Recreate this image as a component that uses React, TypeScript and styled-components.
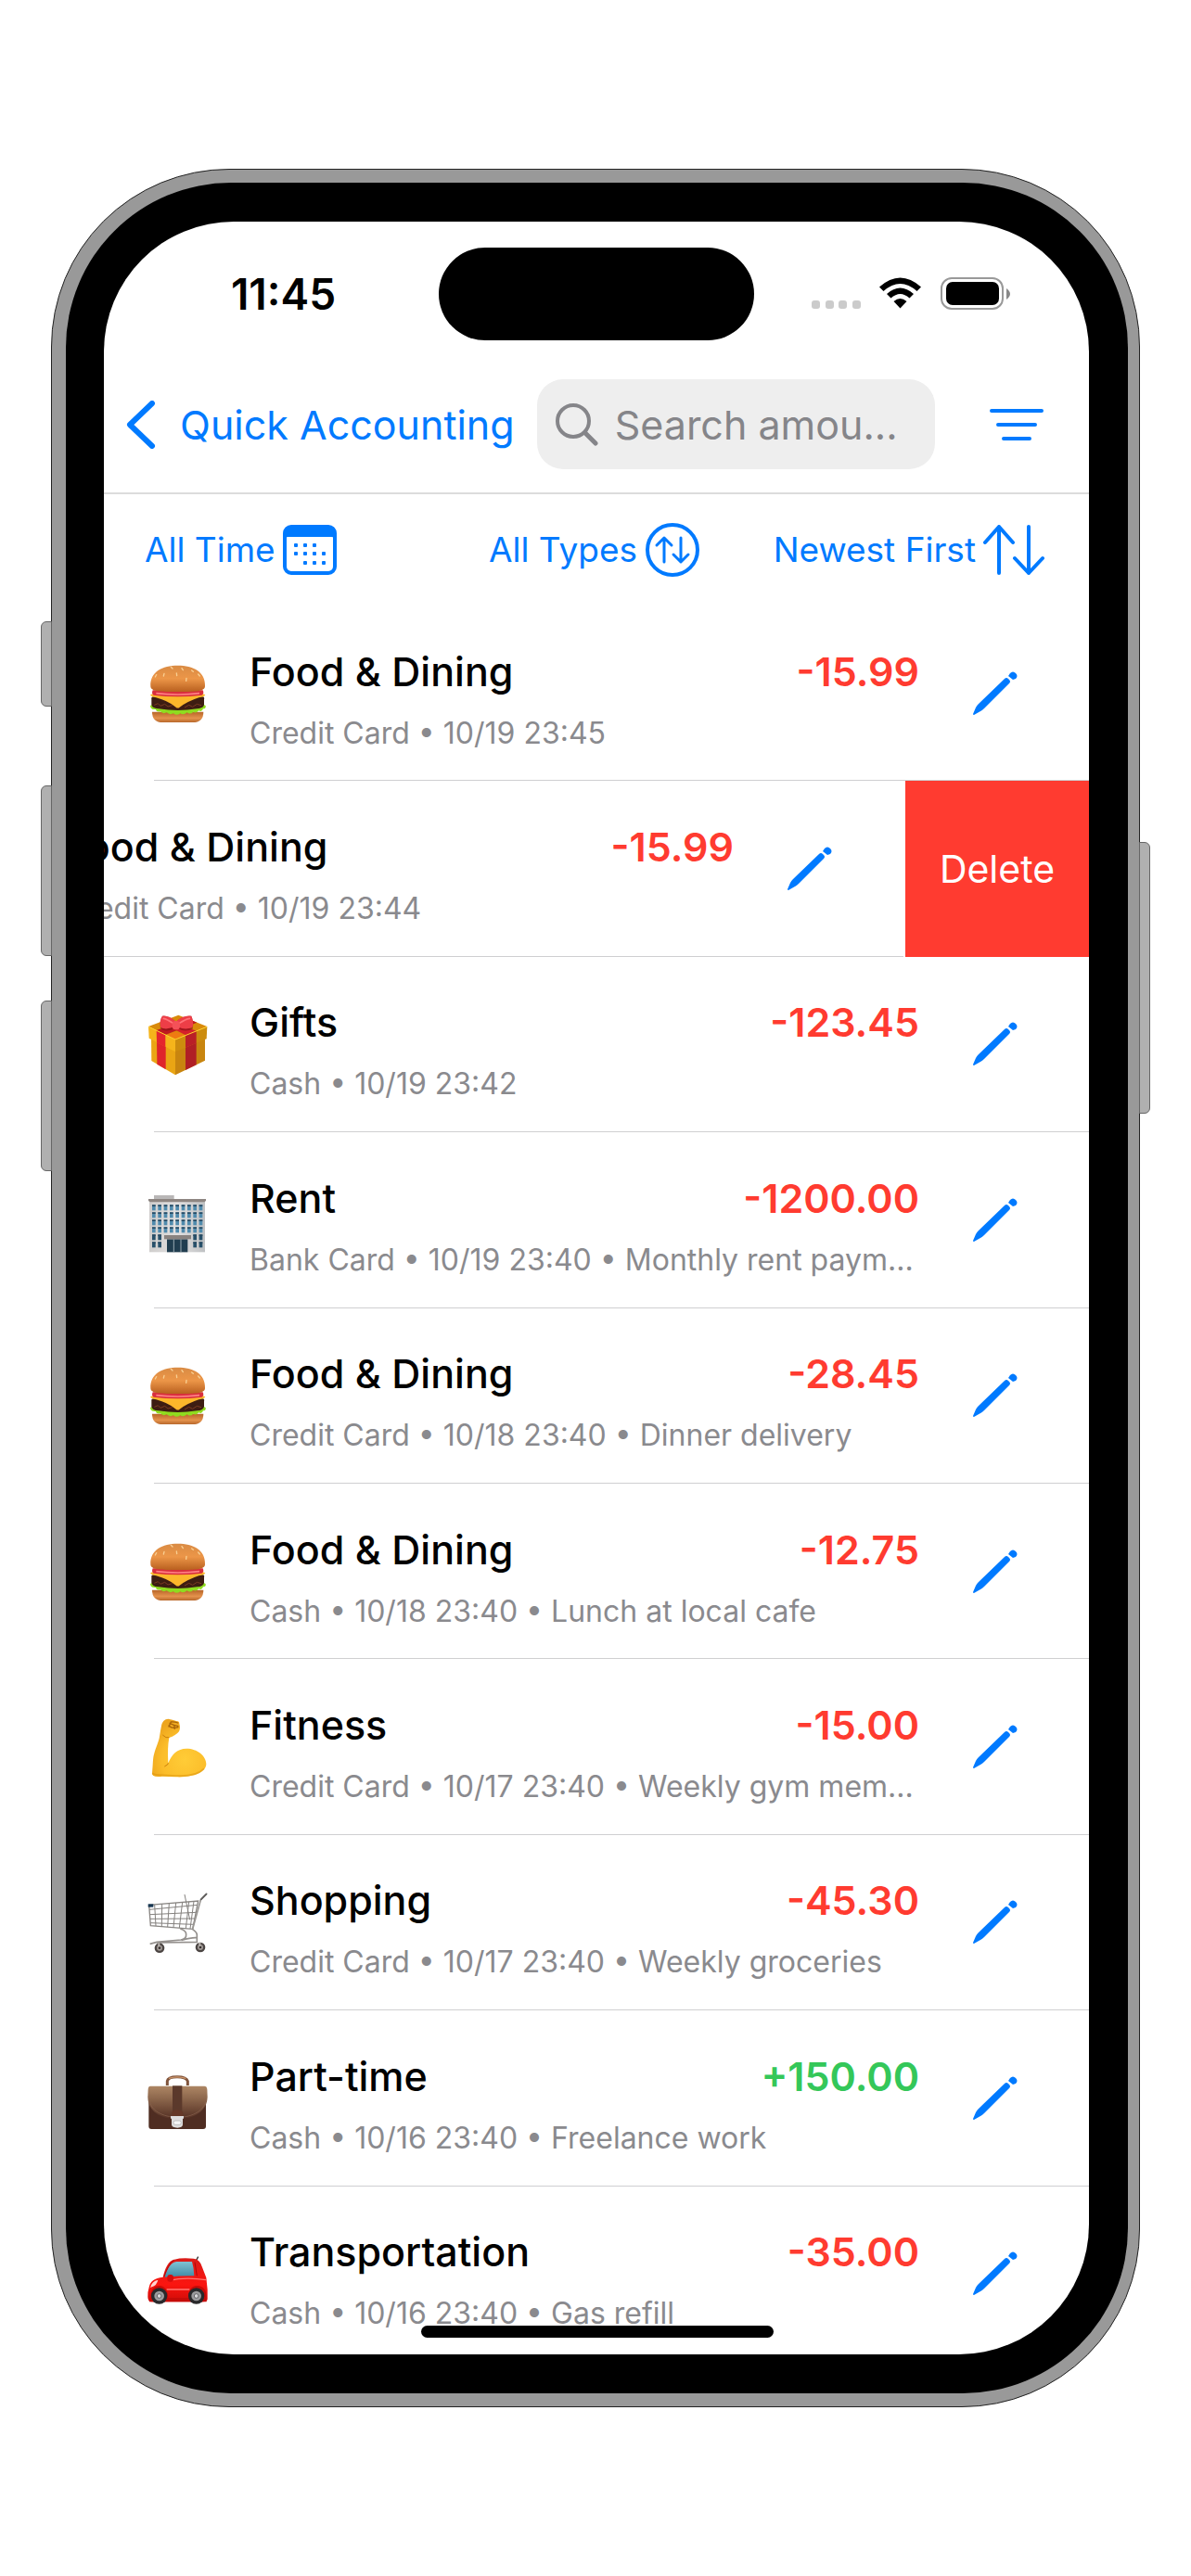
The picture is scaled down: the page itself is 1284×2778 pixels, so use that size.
import { useState } from "react";
import styled, { createGlobalStyle } from "styled-components";

type IconName = "burger" | "gift" | "building" | "arm" | "cart" | "briefcase" | "car";

interface Transaction {
  id: number;
  icon: IconName;
  title: string;
  details: string;
  amount: string;
}

const transactions: Transaction[] = [
  { id: 1, icon: "burger", title: "Food & Dining", details: "Credit Card • 10/19 23:45", amount: "-15.99" },
  { id: 2, icon: "burger", title: "Food & Dining", details: "Credit Card • 10/19 23:44", amount: "-15.99" },
  { id: 3, icon: "gift", title: "Gifts", details: "Cash • 10/19 23:42", amount: "-123.45" },
  { id: 4, icon: "building", title: "Rent", details: "Bank Card • 10/19 23:40 • Monthly rent paym...", amount: "-1200.00" },
  { id: 5, icon: "burger", title: "Food & Dining", details: "Credit Card • 10/18 23:40 • Dinner delivery", amount: "-28.45" },
  { id: 6, icon: "burger", title: "Food & Dining", details: "Cash • 10/18 23:40 • Lunch at local cafe", amount: "-12.75" },
  { id: 7, icon: "arm", title: "Fitness", details: "Credit Card • 10/17 23:40 • Weekly gym mem...", amount: "-15.00" },
  { id: 8, icon: "cart", title: "Shopping", details: "Credit Card • 10/17 23:40 • Weekly groceries", amount: "-45.30" },
  { id: 9, icon: "briefcase", title: "Part-time", details: "Cash • 10/16 23:40 • Freelance work", amount: "+150.00" },
  { id: 10, icon: "car", title: "Transportation", details: "Cash • 10/16 23:40 • Gas refill", amount: "-35.00" },
];

const Burger = () => (
  <>
    <path d="M15 158 Q15 192 50 192 H146 Q181 192 181 158 Z" fill="url(#bunBottom)" />
    <path d="M9 138 Q20 128 98 130 Q178 128 188 138 Q190 148 180 148 Q176 160 166 154 Q158 164 148 158 Q138 168 128 160 Q116 170 106 163 Q94 172 84 163 Q72 169 62 160 Q50 166 42 157 Q30 160 26 150 Q10 152 9 138 Z" fill="#8fdc1f" />
    <path d="M13 116 Q11 108 24 108 H174 Q186 108 183 118 V134 Q182 146 160 148 Q98 158 36 148 Q14 146 13 134 Z" fill="#3d1d12" />
    <path d="M22 136 l12 -5 8 8 14 -6 10 8 14 -4 M120 144 l14 -8 12 6 14 -9 14 4" stroke="#7a3b22" strokeWidth="3" fill="none" />
    <path d="M9 103 Q20 94 98 98 Q176 94 187 103 Q184 110 166 112 Q130 124 104 143 Q98 148 92 143 Q66 122 28 112 Q12 110 9 103 Z" fill="#fcb72b" />
    <path d="M17 88 H179 Q184 100 176 104 Q98 113 20 104 Q12 100 17 88 Z" fill="#d92f3d" />
    <path d="M28 98 Q98 106 168 98" stroke="#ff7f83" strokeWidth="5" fill="none" />
    <path d="M10 75 C8 28 48 8 98 8 C148 8 188 28 186 75 C186 94 146 93 98 93 C50 93 10 94 10 75 Z" fill="url(#bunTop)" />
    <path d="M54 34 l-2 8 M29 38 l-4 7 M76 13 l5 5 M94 33 l1 8 M111 17 l4 6 M126 49 l-1 9 M143 24 l5 4 M164 36 l5 6" stroke="#f9cf92" strokeWidth="4" strokeLinecap="round" />
  </>
);

const Gift = () => (
  <>
    <path d="M12 72 L90 112 V199 L13 153 Z" fill="#eaa514" />
    <path d="M90 112 L186 72 V152 L90 199 Z" fill="#c8850f" />
    <path d="M30 84 L59 100 V181 L31 164 Z" fill="#df242b" />
    <path d="M123 100 L158 86 V166 L123 183 Z" fill="#b01f25" />
    <path d="M3 42 L100 5 L193 42 L90 86 Z" fill="#d98a0b" />
    <path d="M3 42 L90 84 V124 L5 80 Z" fill="#f5b41b" />
    <path d="M90 84 L193 42 L191 82 L90 124 Z" fill="#cc8c0e" />
    <path d="M29 54 L58 69 V109 L30 94 Z" fill="#e5262d" />
    <path d="M123 70 L158 56 V96 L123 110 Z" fill="#b91f27" />
    <path d="M29 54 L58 69 L160 29 L134 18 Z" fill="#bd1920" />
    <path d="M123 70 L158 56 L63 20 L41 28 Z" fill="#d5202a" />
    <path d="M62 70 L90 59 L121 70 L90 83 Z" fill="#ef7a12" />
    <path d="M4 43 L90 84 L192 43" fill="none" stroke="#ffd22e" strokeWidth="3" />
    <path d="M92 46 Q60 64 42 48 Q38 24 48 8 Q68 6 92 27 Q116 6 142 8 Q150 28 146 50 Q120 62 92 46 Z" fill="#801015" opacity="0.6" />
    <path d="M92 40 Q60 56 42 44 Q38 22 48 8 Q68 4 92 26 Q116 4 142 8 Q150 26 146 44 Q120 56 92 40 Z" fill="#ed3e47" />
    <path d="M84 32 Q62 18 52 16 M102 32 Q124 18 136 16" stroke="#ff7378" strokeWidth="5" fill="none" strokeLinecap="round" />
    <rect x="80" y="24" width="25" height="28" rx="11" fill="#f45158" />
  </>
);

const Building = () => {
  const columns = [0, 1, 2, 3, 4, 5, 6, 7, 8];
  const floors = [0, 1, 2, 3, 4, 5];
  return (
    <>
      <rect x="21" y="18" width="65" height="14" fill="#b9b7b7" />
      <rect x="6" y="37" width="180" height="165" fill="url(#wall)" />
      <path d="M3 30 H189 V36 L184 40 H8 L3 36 Z" fill="#8d8581" />
      {floors.map((floor) =>
        columns
          .filter((column) => floor < 4 || column < 2 || column > 6)
          .map((column) => (
            <g key={`${floor}-${column}`}>
              <rect x={15 + column * 19} y={49 + floor * 24} width="11" height="18" fill={floor < 4 ? "#508bad" : "#28516b"} />
              <rect x={15 + column * 19} y={49 + floor * 24} width="11" height="5" fill="#294b63" />
            </g>
          ))
      )}
      <rect x="63" y="160" width="67" height="42" fill="#213e50" />
      <path d="M85 160 V202 M108 160 V202" stroke="#9baab2" strokeWidth="3" />
      <rect x="54" y="147" width="87" height="13" fill="#898380" />
    </>
  );
};

const Arm = () => (
  <>
    <path d="M45 31 C47 17 56 8 67 8 Q82 10 93 15 Q104 15 103 24 C106 31 106 42 102 49 Q92 62 70 69 Q64 101 67 151 C79 123 96 104 126 104 C161 104 190 128 190 154 C190 182 145 199 91 196 L48 194 Q13 198 15 184 C18 155 17 137 21 123 C26 102 37 80 39 65 Q42 45 45 31 Z" fill="url(#skin)" />
    <path d="M69 33 L76 18 Q88 17 98 21 M72 22 Q83 30 99 31 M69 30 Q80 41 99 35 M86 28 L88 40" fill="none" stroke="#a66308" strokeWidth="4" strokeLinecap="round" />
    <path d="M49 60 Q60 72 70 68 M67 151 Q69 155 55 162" fill="none" stroke="#ca7d0a" strokeWidth="3" />
    <path d="M16 184 Q20 190 51 190 L95 192 Q157 195 183 169" fill="none" stroke="#df970f" strokeWidth="5" opacity="0.6" />
  </>
);

const Cart = () => (
  <>
    <path d="M5 43 L164 30 L146 121 L10 110 Z" fill="none" stroke="#8a8784" strokeWidth="4" />
    <path d="M6 58 L162 43 M8 74 L158 67 M9 88 L154 87 M10 101 L150 106 M23 42 L27 111 M47 40 L46 113 M70 38 L65 114 M92 36 L84 115 M113 34 L103 117 M134 33 L124 119 M150 31 L138 120 M120 9 L137 91" fill="none" stroke="#85827f" strokeWidth="3" />
    <path d="M146 121 L172 27 L191 7" fill="none" stroke="#9a9794" strokeWidth="5" />
    <path d="M173 25 L191 7" stroke="#5f5d5c" strokeWidth="5" strokeLinecap="round" />
    <path d="M106 120 Q126 126 125 139 Q126 152 108 156 L30 163 L8 169 M145 121 Q162 132 160 143 L160 163 L30 165 M110 157 Q142 148 158 149" fill="none" stroke="#94908d" strokeWidth="5" />
    <rect x="2" y="40" width="17" height="10" fill="#183752" />
    <circle cx="39" cy="182" r="16" fill="#4b4543" />
    <circle cx="171" cy="180" r="16" fill="#4b4543" />
    <circle cx="39" cy="182" r="9" fill="#a29b97" />
    <circle cx="171" cy="180" r="9" fill="#a29b97" />
    <circle cx="39" cy="182" r="4" fill="#37312f" />
    <circle cx="171" cy="180" r="4" fill="#37312f" />
    <path d="M37 166 V178 M169 164 V176" stroke="#bbb5b1" strokeWidth="6" />
  </>
);

const Briefcase = () => (
  <>
    <path d="M64 57 V43 Q66 29 96 29 Q126 29 130 43 V57" fill="none" stroke="#80543c" strokeWidth="9" />
    <path d="M69 34 Q96 25 124 34" fill="none" stroke="#d19a6d" strokeWidth="4" />
    <rect x="4" y="60" width="185" height="138" rx="9" fill="#4f2d22" />
    <path d="M9 59 H184 Q192 59 193 69 L194 94 C193 140 151 166 98 166 C41 166 1 140 1 94 L2 69 Q3 59 9 59 Z" fill="url(#leather)" />
    <path d="M5 101 C9 137 48 160 98 160 C148 160 185 137 190 101" fill="none" stroke="#8a6350" strokeWidth="2" />
    <path d="M81 58 H112 V160 H81 Z" fill="#5b392b" />
    <path d="M78 157 V147 Q80 136 96 136 Q113 136 115 147 V157 Z" fill="#653828" />
    <path d="M75 156 H117 V164 H114 V184 Q113 194 97 194 Q79 194 78 184 V164 H75 Z" fill="#dedddd" />
    <rect x="84" y="171" width="25" height="13" rx="6" fill="#f6f6f6" stroke="#aaa" strokeWidth="2" />
  </>
);

const Car = () => (
  <>
    <path d="M155 61 L164 44" stroke="#333" strokeWidth="4" />
    <path d="M50 110 C56 84 68 55 87 53 Q110 46 149 50 Q170 52 177 78 L190 112 L194 150 V181 Q194 190 179 190 H14 Q1 190 1 174 Q0 158 5 143 Q9 114 50 110 Z" fill="url(#carBody)" />
    <path d="M56 110 C64 82 76 61 94 60 H144 Q150 79 151 106 Q100 106 56 110 Z" fill="url(#glass)" />
    <path d="M53 109 Q67 69 85 55 M153 62 L160 106" fill="none" stroke="#a90b0b" strokeWidth="3" />
    <path d="M9 144 Q14 123 34 119 Q30 137 14 142 Z" fill="#ffd4d0" />
    <path d="M62 150 H136 M70 121 Q123 109 189 119" fill="none" stroke="#ff7771" strokeWidth="4" />
    <path d="M11 174 Q10 139 39 138 Q64 139 67 177 H133 Q132 139 160 138 Q191 139 191 177 V190 H5 Z" fill="#c60b08" />
    <rect x="64" y="102" width="20" height="23" rx="9" fill="#d70c0b" />
    <circle cx="38" cy="171" r="26" fill="#29292b" />
    <circle cx="158" cy="171" r="26" fill="#29292b" />
    <circle cx="38" cy="171" r="16" fill="#9b9b9d" />
    <circle cx="158" cy="171" r="16" fill="#9b9b9d" />
    <circle cx="38" cy="171" r="7" fill="#d9d9da" stroke="#66666a" strokeWidth="3" />
    <circle cx="158" cy="171" r="7" fill="#d9d9da" stroke="#66666a" strokeWidth="3" />
  </>
);

const drawings = {
  burger: Burger,
  gift: Gift,
  building: Building,
  arm: Arm,
  cart: Cart,
  briefcase: Briefcase,
  car: Car,
};

const CategoryIcon = ({ name }: { name: IconName }) => {
  const Drawing = drawings[name];
  return (
    <StyledCategoryIcon viewBox="0 0 198 198" aria-hidden="true">
      <Drawing />
    </StyledCategoryIcon>
  );
};

// Gradients shared by the category drawings
const Gradients = () => (
  <HiddenDefs aria-hidden="true">
    <defs>
      <linearGradient id="bunTop" x1="0" y1="0" x2="0" y2="1">
        <stop offset="0" stopColor="#d98b44" />
        <stop offset="0.5" stopColor="#ec9648" />
        <stop offset="1" stopColor="#b9601f" />
      </linearGradient>
      <linearGradient id="bunBottom" x1="0" y1="0" x2="0" y2="1">
        <stop offset="0" stopColor="#b76529" />
        <stop offset="0.6" stopColor="#e4924c" />
        <stop offset="1" stopColor="#b8682c" />
      </linearGradient>
      <linearGradient id="wall" x1="0" y1="0" x2="1" y2="0">
        <stop offset="0" stopColor="#cfcdcc" />
        <stop offset="0.5" stopColor="#e2e1e1" />
        <stop offset="1" stopColor="#bfc1c3" />
      </linearGradient>
      <radialGradient id="skin" cx="0.6" cy="0.7" r="0.7">
        <stop offset="0" stopColor="#ffcc37" />
        <stop offset="0.6" stopColor="#fbbd2a" />
        <stop offset="1" stopColor="#eda51d" />
      </radialGradient>
      <linearGradient id="leather" x1="0" y1="0" x2="0" y2="1">
        <stop offset="0" stopColor="#ad8664" />
        <stop offset="0.35" stopColor="#8f694e" />
        <stop offset="1" stopColor="#532f23" />
      </linearGradient>
      <linearGradient id="carBody" x1="0" y1="0" x2="0" y2="1">
        <stop offset="0" stopColor="#d91b18" />
        <stop offset="0.6" stopColor="#fb1510" />
        <stop offset="1" stopColor="#d00c08" />
      </linearGradient>
      <linearGradient id="glass" x1="0" y1="0" x2="0" y2="1">
        <stop offset="0" stopColor="#7fc1d2" />
        <stop offset="1" stopColor="#3f8ba5" />
      </linearGradient>
    </defs>
  </HiddenDefs>
);

const StatusIcons = () => (
  <StatusGroup>
    <svg width="53" height="36" viewBox="0 0 53 36" fill="#cbcbcb">
      {[0, 15, 29, 44].map((x) => (
        <rect key={x} x={x} y="25" width="9" height="9" rx="3" />
      ))}
    </svg>
    <svg width="46" height="36" viewBox="0 0 46 36">
      <path d="M0 10.5 Q22.5 -9.5 45 10.5 L40.5 15 Q22.5 -1 4.5 15 Z" />
      <path d="M8 18 Q22.5 5 37 18 L32.5 22.5 Q22.5 13.5 12.5 22.5 Z" />
      <path d="M15.5 26 Q22.5 20 29.5 26 L22.5 33.5 Z" />
    </svg>
    <svg width="75" height="36" viewBox="0 0 75 36">
      <rect x="1" y="1" width="66" height="33" rx="11" fill="none" stroke="#999" strokeWidth="2" />
      <rect x="6" y="5" width="57" height="25" rx="7" />
      <path d="M71 12 Q75 15 75 18 Q75 21 71 24 Z" fill="#888" />
    </svg>
  </StatusGroup>
);

const CalendarIcon = () => (
  <svg width="58" height="54" viewBox="0 0 58 54">
    <rect x="2" y="2" width="54" height="50" rx="7" fill="none" stroke="currentColor" strokeWidth="4" />
    <path d="M1 15 V8 Q1 1 9 1 H49 Q57 1 57 8 V15 Q56 13 52 13 H6 Q2 13 1 15 Z" fill="currentColor" />
    {[[14, 22], [24, 22], [34, 22], [14, 31], [24, 31], [34, 31], [44, 31], [24, 41], [34, 41], [44, 41]].map(([cx, cy]) => (
      <rect key={`${cx}-${cy}`} x={cx - 2} y={cy - 2} width="4" height="4" rx="1" fill="currentColor" />
    ))}
  </svg>
);

const TypesIcon = () => (
  <svg width="60" height="60" viewBox="0 0 60 60" fill="none" stroke="currentColor" strokeWidth="4" strokeLinecap="round" strokeLinejoin="round">
    <circle cx="30" cy="30" r="27" />
    <path d="M21 43 V17 M13 25 L21 17 L29 25 M39 17 V43 M31 35 L39 43 L47 35" strokeWidth="3" />
  </svg>
);

const SortIcon = () => (
  <svg width="66" height="56" viewBox="0 0 66 56" fill="none" stroke="currentColor" strokeWidth="4" strokeLinecap="round" strokeLinejoin="round">
    <path d="M17 53 V3 M2 20 L17 3 L32 20 M49 3 V53 M34 37 L49 53 L64 37" />
  </svg>
);

const PencilIcon = () => (
  <svg width="48" height="48" viewBox="0 0 48 48" fill="currentColor">
    <path d="M1 47 Q0 47 0 46 L3 39 Q4 37 6 35 L34 8 Q36 6 38 8 L39 9 Q41 11 39 13 L12 40 Q10 42 8 43 Z" />
    <path d="M38 5 L40 2 Q43 -1 46 2 Q49 5 46 8 L43 9 Z" />
  </svg>
);

const Row = ({ transaction }: { transaction: Transaction }) => (
  <RowContent>
    <CategoryIcon name={transaction.icon} />
    <RowText>
      <RowTop>
        <RowTitle>{transaction.title}</RowTitle>
        <Amount $income={transaction.amount.startsWith("+")}>{transaction.amount}</Amount>
      </RowTop>
      <Details>{transaction.details}</Details>
    </RowText>
    <EditButton type="button" aria-label="Edit">
      <PencilIcon />
    </EditButton>
  </RowContent>
);

const App = () => {
  const [items, setItems] = useState(transactions);
  const [query, setQuery] = useState("");
  const swipedId = 2;

  return (
    <>
      <GlobalStyle />
      <Gradients />
      <Page>
        <Phone>
          <SideButton $side="left" $top={487} $height={92} />
          <SideButton $side="left" $top={664} $height={184} />
          <SideButton $side="left" $top={896} $height={184} />
          <SideButton $side="right" $top={725} $height={293} />
          <Bezel>
            <Screen>
              <StatusBar>
                <Time>11:45</Time>
                <Island />
                <StatusIcons />
              </StatusBar>
              <NavBar>
                <BackLink href="#">
                  <svg width="32" height="52" viewBox="0 0 32 52" fill="none" stroke="currentColor" strokeWidth="6" strokeLinecap="round" strokeLinejoin="round">
                    <path d="M28 3 L4 26 L28 49" />
                  </svg>
                  Quick Accounting
                </BackLink>
                <SearchBox>
                  <svg width="46" height="46" viewBox="0 0 46 46" fill="none" stroke="currentColor" strokeWidth="4" strokeLinecap="round">
                    <circle cx="19" cy="19" r="17" />
                    <path d="M32 32 L43 43" strokeWidth="5" />
                  </svg>
                  <SearchInput
                    type="text"
                    aria-label="Search"
                    placeholder="Search amou..."
                    value={query}
                    onChange={(e) => setQuery(e.target.value)}
                  />
                </SearchBox>
                <IconButton type="button" aria-label="Filter">
                  <svg width="60" height="36" viewBox="0 0 60 36" stroke="currentColor" strokeWidth="4" strokeLinecap="round">
                    <path d="M3 3 H57 M10 18 H50 M16 33 H44" />
                  </svg>
                </IconButton>
              </NavBar>
              <Filters>
                <FilterButton type="button">
                  All Time
                  <CalendarIcon />
                </FilterButton>
                <FilterButton type="button">
                  All Types
                  <TypesIcon />
                </FilterButton>
                <FilterButton type="button">
                  Newest First
                  <SortIcon />
                </FilterButton>
              </Filters>
              <List>
                {items.map((item) => (
                  <ListItem key={item.id} $swiped={item.id === swipedId}>
                    <Row transaction={item} />
                    {item.id === swipedId && (
                      <DeleteButton type="button" onClick={() => setItems(items.filter((i) => i.id !== item.id))}>
                        Delete
                      </DeleteButton>
                    )}
                  </ListItem>
                ))}
              </List>
              <HomeIndicator />
            </Screen>
          </Bezel>
        </Phone>
      </Page>
    </>
  );
};

export default App;

const GlobalStyle = createGlobalStyle`
  * {
    box-sizing: border-box;
  }
  body {
    margin: 0;
    background: #fff;
    font-family: Inter, "Liberation Sans", sans-serif;
    color: #000;
  }
  button,
  input {
    font-family: inherit;
    border: none;
    padding: 0;
    background: none;
  }
  svg {
    display: block;
    flex-shrink: 0;
  }
`;

const HiddenDefs = styled.svg`
  position: absolute;
  width: 0;
  height: 0;
`;

const Page = styled.main`
  min-height: 100vh;
  padding: 182px 55px;
  display: flex;
`;

const Phone = styled.div`
  position: relative;
  flex: 1;
  min-width: 0;
  display: flex;
  padding: 14px 12px 14px 15px;
  border: 1px solid #222;
  border-radius: 192px;
  background: #999;
`;

const SideButton = styled.span<{ $side: "left" | "right"; $top: number; $height: number }>`
  position: absolute;
  ${({ $side }) => $side}: -12px;
  top: ${({ $top }) => $top}px;
  width: 12px;
  height: ${({ $height }) => $height}px;
  border: 1px solid #666;
  border-radius: ${({ $side }) => ($side === "left" ? "6px 0 0 6px" : "0 6px 6px 0")};
  background: #b0b0b0;
`;

const Bezel = styled.div`
  flex: 1;
  min-width: 0;
  display: flex;
  padding: 42px 42px 42px 41px;
  border-radius: 178px;
  background: #000;
`;

const Screen = styled.div`
  position: relative;
  flex: 1;
  min-width: 0;
  display: flex;
  flex-direction: column;
  overflow: hidden;
  border-radius: 140px;
  background: #fff;
`;

const StatusBar = styled.div`
  display: grid;
  grid-template-columns: 1fr 340px 1fr;
  align-items: center;
  justify-items: center;
  padding: 28px 0 16px;
`;

const Time = styled.time`
  padding-left: 26px;
  font-size: 46px;
  font-weight: 600;
  line-height: 52px;
`;

const Island = styled.div`
  width: 340px;
  height: 100px;
  border-radius: 50px;
  background: #000;
`;

const StatusGroup = styled.div`
  display: flex;
  align-items: center;
  gap: 20px;
  padding-right: 24px;
`;

const NavBar = styled.nav`
  display: flex;
  align-items: center;
  padding: 26px 48px 25px 24px;
  border-bottom: 2px solid #dcdcdc;
`;

const BackLink = styled.a`
  display: flex;
  align-items: center;
  gap: 26px;
  margin-right: 24px;
  font-size: 43px;
  line-height: 56px;
  white-space: nowrap;
  text-decoration: none;
  color: #007aff;
`;

const SearchBox = styled.label`
  flex: 1;
  min-width: 0;
  height: 97px;
  display: flex;
  align-items: center;
  gap: 18px;
  padding: 0 20px;
  border-radius: 28px;
  background: #eee;
  color: #858589;
`;

const SearchInput = styled.input`
  flex: 1;
  min-width: 0;
  font-size: 43px;
  line-height: 56px;
  outline: none;
  &::placeholder {
    color: #858589;
    opacity: 1;
  }
`;

const IconButton = styled.button`
  margin-left: 58px;
  color: #007aff;
`;

const Filters = styled.div`
  display: grid;
  grid-template-columns: 1fr auto 1fr;
  align-items: center;
  padding: 30px 48px 30px 44px;
`;

const FilterButton = styled.button`
  display: flex;
  align-items: center;
  gap: 8px;
  height: 60px;
  font-size: 37px;
  line-height: 44px;
  white-space: nowrap;
  color: #007aff;
  &:last-child {
    justify-self: end;
  }
`;

const List = styled.ul`
  flex: 1;
  display: grid;
  grid-auto-rows: 1fr;
  margin: 0 0 -8px;
  padding: 0;
  list-style: none;
`;

const ListItem = styled.li<{ $swiped: boolean }>`
  display: flex;
  gap: 2px;
  min-width: 0;
  justify-content: ${({ $swiped }) => ($swiped ? "flex-end" : "flex-start")};
  overflow: hidden;
`;

const RowContent = styled.div`
  position: relative;
  flex: 0 0 100%;
  min-width: 0;
  display: flex;
  align-items: center;
  padding: 0 61px 0 47px;
  &::after {
    content: "";
    position: absolute;
    left: 54px;
    right: 0;
    bottom: 0;
    height: 1px;
    background: #cfcfd1;
  }
`;

const StyledCategoryIcon = styled.svg`
  width: 66px;
  height: 66px;
  overflow: visible;
`;

const RowText = styled.div`
  flex: 1;
  min-width: 0;
  display: flex;
  flex-direction: column;
  gap: 18px;
  margin: 0 42px 0 44px;
  padding-top: 12px;
`;

const RowTop = styled.div`
  display: flex;
  justify-content: space-between;
  font-size: 43px;
  line-height: 56px;
`;

const RowTitle = styled.span`
  font-weight: 500;
`;

const Amount = styled.span<{ $income: boolean }>`
  font-weight: 600;
  color: ${({ $income }) => ($income ? "#34c759" : "#ff3b30")};
`;

const Details = styled.span`
  font-size: 32px;
  line-height: 42px;
  white-space: nowrap;
  color: #8a8a8e;
`;

const EditButton = styled.button`
  width: 80px;
  display: flex;
  justify-content: center;
  color: #007aff;
`;

const DeleteButton = styled.button`
  flex: 0 0 198px;
  font-size: 41px;
  line-height: 48px;
  color: #fff;
  background: #ff3b30;
`;

const HomeIndicator = styled.div`
  position: absolute;
  left: 50%;
  bottom: 18px;
  width: 380px;
  height: 13px;
  margin-left: -189px;
  border-radius: 7px;
  background: #000;
`;
